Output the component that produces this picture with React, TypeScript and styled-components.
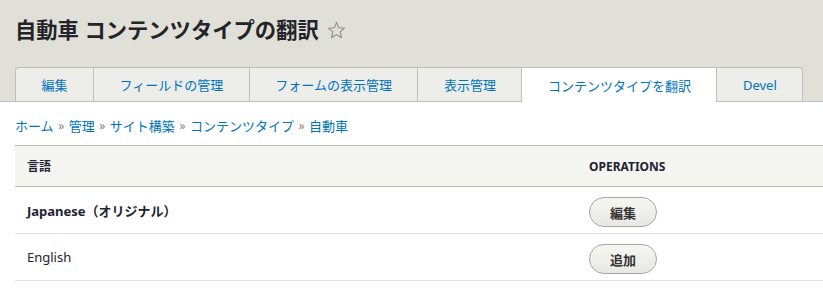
import React from "react";
import styled, { createGlobalStyle } from "styled-components";

const GlobalStyle = createGlobalStyle`
  body {
    margin: 0;
    background: #ffffff;
    font-family: "Noto Sans", "Noto Sans CJK JP", sans-serif;
    color: #222330;
  }
`;

const Header = styled.div`
  background: #e0e0d8;
  border-bottom: 1px solid #bfbfba;
  padding: 15px 0 0 15px;
`;

const Title = styled.h1`
  margin: 0;
  display: flex;
  align-items: center;
  gap: 8px;
  font-size: 21.3px;
  line-height: 30px;
  font-weight: 700;
  color: #232429;
`;

const Star = styled.svg`
  width: 19px;
  height: 19px;
  margin-top: 1px;
`;

const Tabs = styled.ul`
  list-style: none;
  margin: 22px 0 0;
  padding: 0;
  display: flex;
`;

const Tab = styled.li<{ $active?: boolean }>`
  box-sizing: border-box;
  height: ${(p) => (p.$active ? "35px" : "34px")};
  margin-bottom: ${(p) => (p.$active ? "-1px" : "0")};
  margin-left: -1px;
  padding: 0 25.5px;
  display: flex;
  align-items: center;
  background: ${(p) => (p.$active ? "#ffffff" : "#ededea")};
  border: 1px solid #bfbfba;
  border-bottom: ${(p) => (p.$active ? "none" : "0")};
  font-size: 13px;
  color: #0074bd;
  white-space: nowrap;

  &:first-child {
    margin-left: 0;
    border-top-left-radius: 4px;
  }
  &:last-child {
    border-top-right-radius: 4px;
  }
`;

const Content = styled.div`
  padding: 14px 0 0 15px;
`;

const Breadcrumb = styled.nav`
  display: flex;
  align-items: center;
  gap: 4.5px;
  font-size: 13px;
  line-height: 20px;
  margin-bottom: 9px;
`;

const Crumb = styled.a`
  color: #0074bd;
  text-decoration: none;
`;

const Sep = styled.span`
  color: #8a8375;
  font-size: 12px;
`;

const Table = styled.table`
  width: 100%;
  border-collapse: collapse;
  font-size: 13px;
`;

const HeadCell = styled.th`
  background: #f5f5f2;
  border-top: 1px solid #bfbfba;
  border-bottom: 1px solid #bfbfba;
  height: 40px;
  padding: 0 12px;
  text-align: left;
  font-size: 12px;
  font-weight: 700;
  color: #222330;
  text-transform: uppercase;
  box-sizing: content-box;
`;

const Row = styled.tr`
  border-bottom: 1px solid #e2e2de;
`;

const Cell = styled.td<{ $bold?: boolean; $ops?: boolean }>`
  height: 47px;
  padding: ${(p) => (p.$ops ? "4px 12px 0" : "0 12px")};
  box-sizing: border-box;
  vertical-align: middle;
  font-weight: ${(p) => (p.$bold ? 700 : 400)};
  color: #222330;
`;

const Button = styled.button`
  box-sizing: border-box;
  height: 30px;
  padding: 0 20px;
  border: 1px solid #a6a6a6;
  border-radius: 15px;
  background: linear-gradient(#f6f6f3, #e8e8e3);
  font-family: "Noto Sans", "Noto Sans CJK JP", sans-serif;
  font-size: 13px;
  font-weight: 700;
  color: #333333;
`;

const languages = [
  { name: "Japanese（オリジナル）", bold: true, action: "編集" },
  { name: "English", bold: false, action: "追加" },
];

const tabs = [
  "編集",
  "フィールドの管理",
  "フォームの表示管理",
  "表示管理",
  "コンテンツタイプを翻訳",
  "Devel",
];

const crumbs = ["ホーム", "管理", "サイト構築", "コンテンツタイプ", "自動車"];

export default function App() {
  return (
    <>
      <GlobalStyle />
      <Header>
        <Title>
          自動車 コンテンツタイプの翻訳
          <Star viewBox="0 0 20 20">
            <polygon
              points="10,1.5 12.4,7.2 18.5,7.6 13.8,11.5 15.3,17.6 10,14.3 4.7,17.6 6.2,11.5 1.5,7.6 7.6,7.2"
              fill="none"
              stroke="#8b8b80"
              strokeWidth="1.1"
              strokeLinejoin="round"
            />
          </Star>
        </Title>
        <Tabs>
          {tabs.map((t, i) => (
            <Tab key={t} $active={i === 4}>
              {t}
            </Tab>
          ))}
        </Tabs>
      </Header>
      <Content>
        <Breadcrumb>
          {crumbs.map((c, i) => (
            <React.Fragment key={c}>
              {i > 0 && <Sep>»</Sep>}
              <Crumb href="#">{c}</Crumb>
            </React.Fragment>
          ))}
        </Breadcrumb>
        <Table>
          <colgroup>
            <col style={{ width: "562px" }} />
            <col />
          </colgroup>
          <thead>
            <tr>
              <HeadCell>言語</HeadCell>
              <HeadCell>Operations</HeadCell>
            </tr>
          </thead>
          <tbody>
            {languages.map((l) => (
              <Row key={l.name}>
                <Cell $bold={l.bold}>{l.name}</Cell>
                <Cell $ops>
                  <Button>{l.action}</Button>
                </Cell>
              </Row>
            ))}
          </tbody>
        </Table>
      </Content>
    </>
  );
}
